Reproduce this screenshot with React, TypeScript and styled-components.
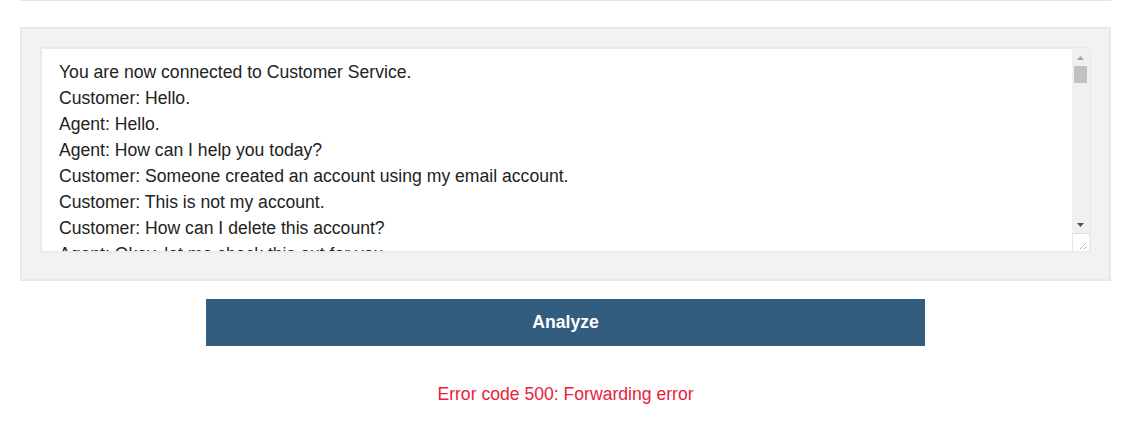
import React from "react";
import styled, { createGlobalStyle } from "styled-components";

const GlobalStyle = createGlobalStyle`
  html, body {
    margin: 0;
    padding: 0;
    background: #fff;
    font-family: "Liberation Sans", Arial, sans-serif;
  }
`;

const transcript = [
  "You are now connected to Customer Service.",
  "Customer: Hello.",
  "Agent: Hello.",
  "Agent: How can I help you today?",
  "Customer: Someone created an account using my email account.",
  "Customer: This is not my account.",
  "Customer: How can I delete this account?",
  "Agent: Okay, let me check this out for you.",
];

export default function App() {
  return (
    <>
      <GlobalStyle />
      <Page>
        <Divider />
        <Panel>
          <ChatBox>
            <ChatText>
              {transcript.map((line, i) => (
                <Line key={i}>{line}</Line>
              ))}
            </ChatText>
            <Scrollbar>
              <ArrowButton>
                <svg width="7" height="4" viewBox="0 0 7 4">
                  <path d="M0 4 L3.5 0 L7 4 Z" fill="#a3a3a3" />
                </svg>
              </ArrowButton>
              <Track>
                <Thumb />
              </Track>
              <ArrowButton>
                <svg width="7" height="4" viewBox="0 0 7 4">
                  <path d="M0 0 L7 0 L3.5 4 Z" fill="#505050" />
                </svg>
              </ArrowButton>
              <Resizer>
                <svg width="9" height="9" viewBox="0 0 9 9">
                  <path
                    d="M1 8 L8 1 M5 8 L8 5"
                    stroke="#8a8a8a"
                    strokeWidth="1"
                    strokeDasharray="1 1"
                  />
                </svg>
              </Resizer>
            </Scrollbar>
          </ChatBox>
        </Panel>
        <AnalyzeButton>Analyze</AnalyzeButton>
        <ErrorText>Error code 500: Forwarding error</ErrorText>
      </Page>
    </>
  );
}

const Page = styled.div`
  width: 1091px;
  margin-left: 20px;
  display: flex;
  flex-direction: column;
  align-items: center;
`;

const Divider = styled.div`
  align-self: stretch;
  height: 1px;
  background: #e5e5e5;
  margin-bottom: 26px;
`;

const Panel = styled.div`
  align-self: stretch;
  background: #f2f2f2;
  border: 2px solid #e9e9e9;
  padding: 18px 18px 26px;
`;

const ChatBox = styled.div`
  height: 202px;
  background: #fff;
  border: 2px solid #ebebeb;
  display: flex;
`;

const ChatText = styled.div`
  flex: 1;
  overflow: hidden;
  padding: 10px 17px;
  font-size: 17.6px;
  line-height: 26px;
  color: #222;
`;

const Line = styled.div`
  white-space: nowrap;
`;

const Scrollbar = styled.div`
  width: 17px;
  background: #f0f0f0;
  display: flex;
  flex-direction: column;
`;

const ArrowButton = styled.div`
  height: 17px;
  display: flex;
  align-items: center;
  justify-content: center;
`;

const Track = styled.div`
  flex: 1;
  padding: 0 2px;
`;

const Thumb = styled.div`
  height: 17px;
  background: #c1c1c1;
`;

const Resizer = styled.div`
  height: 18px;
  background: #fff;
  border-top: 1px solid #dcdcdc;
  border-left: 1px solid #e6e6e6;
  box-sizing: border-box;
  display: flex;
  align-items: flex-end;
  justify-content: flex-end;
  padding: 0 1px 1px 0;
`;

const AnalyzeButton = styled.button`
  margin-top: 18px;
  width: 719px;
  height: 47px;
  border: none;
  background: #335d7f;
  color: #fff;
  font-family: "Liberation Sans", Arial, sans-serif;
  font-weight: bold;
  font-size: 17.6px;
`;

const ErrorText = styled.div`
  margin-top: 38px;
  color: #e8213c;
  font-size: 17.6px;
`;
